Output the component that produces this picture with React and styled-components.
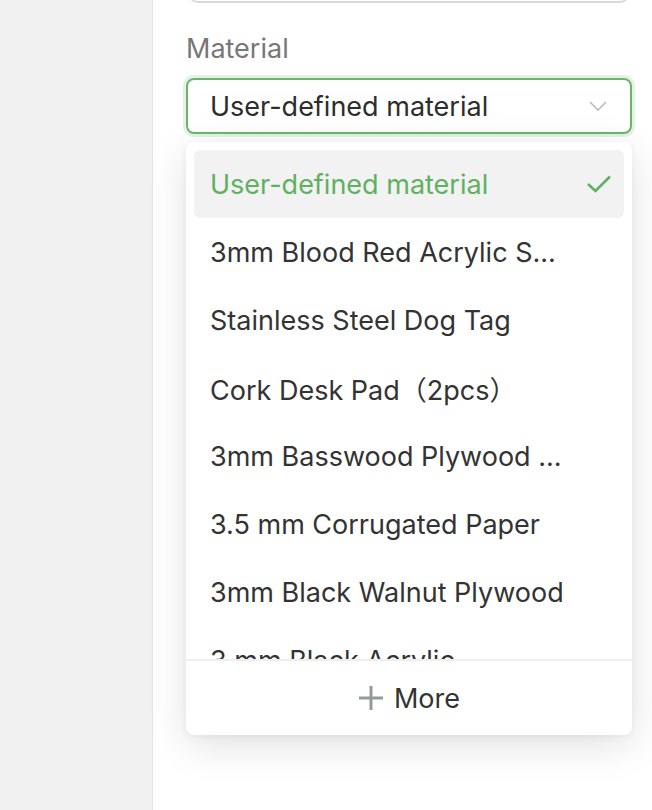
import styled, { createGlobalStyle } from "styled-components";

const GlobalStyle = createGlobalStyle`
  html, body {
    margin: 0;
    padding: 0;
    background: #ffffff;
  }
  * {
    box-sizing: border-box;
  }
`;

const materials = [
  "User-defined material",
  "3mm Blood Red Acrylic S...",
  "Stainless Steel Dog Tag",
  "Cork Desk Pad（2pcs）",
  "3mm Basswood Plywood ...",
  "3.5 mm Corrugated Paper",
  "3mm Black Walnut Plywood",
  "3 mm Black Acrylic",
];

const App = () => {
  const selected = materials[0];

  return (
    <Page>
      <GlobalStyle />
      <SideBar />
      <Panel>
        <PrevField />
        <Label>Material</Label>
        <SelectBox>
          <span>{selected}</span>
          <svg width="20" height="12" viewBox="0 0 20 12">
            <path d="M2 2 L10 10 L18 2" fill="none" stroke="#bdbdbd" strokeWidth="1.6" />
          </svg>
        </SelectBox>
        <Dropdown>
          <List>
            {materials.map((name) => (
              <Option key={name} active={name === selected}>
                <span>{name}</span>
                {name === selected && (
                  <svg width="26" height="20" viewBox="0 0 26 20">
                    <path
                      d="M2 10 L9.5 17 L24 2.5"
                      fill="none"
                      stroke="#5fb160"
                      strokeWidth="2.6"
                    />
                  </svg>
                )}
              </Option>
            ))}
          </List>
          <Footer>
            <svg width="26" height="26" viewBox="0 0 26 26">
              <path d="M13 1 V25 M1 13 H25" stroke="#939d97" strokeWidth="3" />
            </svg>
            <span>More</span>
          </Footer>
        </Dropdown>
      </Panel>
    </Page>
  );
};

const Page = styled.div`
  display: flex;
  height: 810px;
  overflow: hidden;
  font-family: Inter, "Noto Sans CJK SC", sans-serif;
`;

const SideBar = styled.div`
  width: 153px;
  flex-shrink: 0;
  background: #f1f1f1;
  border-right: 1px solid #e4e4e4;
`;

const Panel = styled.div`
  flex: 1;
  display: flex;
  flex-direction: column;
  padding: 0 20px 0 33px;
  background: #ffffff;
`;

const PrevField = styled.div`
  height: 40px;
  margin-top: -37px;
  margin-left: 2px;
  margin-right: 2px;
  border: 2px solid #d8d8d8;
  border-radius: 10px;
`;

const Label = styled.div`
  margin-top: 29px;
  height: 34px;
  line-height: 34px;
  font-size: 27px;
  color: #777777;
`;

const SelectBox = styled.div`
  margin-top: 12px;
  height: 56px;
  display: flex;
  align-items: center;
  justify-content: space-between;
  padding: 0 22px 0 22px;
  border: 2px solid #6db46b;
  border-radius: 8px;
  box-shadow: 0 0 0 3px #e3f2e2;
  font-size: 27px;
  color: #2d2d2d;
`;

const Dropdown = styled.div`
  margin-top: 8px;
  background: #ffffff;
  border-radius: 8px;
  box-shadow: 0 10px 40px rgba(0, 0, 0, 0.12), 0 2px 8px rgba(0, 0, 0, 0.05);
  overflow: hidden;
`;

const List = styled.div`
  height: 517px;
  padding: 8px 8px 0 8px;
  overflow: hidden;
`;

const Option = styled.div`
  height: 68px;
  display: flex;
  align-items: center;
  justify-content: space-between;
  padding: 0 12px 0 16px;
  border-radius: 6px;
  font-size: 27px;
  white-space: nowrap;
  color: ${(p) => (p.active ? "#5fb160" : "#333333")};
  background: ${(p) => (p.active ? "#f2f2f3" : "transparent")};
`;

const Footer = styled.div`
  height: 76px;
  border-top: 2px solid #eeeeee;
  display: flex;
  align-items: center;
  justify-content: center;
  gap: 10px;
  font-size: 27px;
  color: #333333;
`;

export default App;
